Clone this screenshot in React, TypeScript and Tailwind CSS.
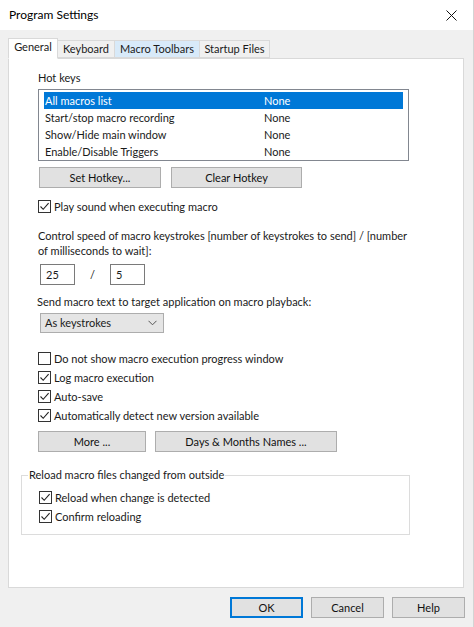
import React, {useState} from 'react';

interface CheckRowProps {
    label: string;
    checked: boolean;
    onToggle: () => void;
}

const CheckRow: React.FC<CheckRowProps> = ({label, checked, onToggle}) => (
    <label className="flex items-center h-[19px] cursor-default select-none" onClick={onToggle}>
        <span className="w-[13px] h-[13px] border border-[#333333] bg-white flex items-center justify-center shrink-0">
            {checked && (
                <svg width="11" height="11" viewBox="0 0 11 11" fill="none">
                    <path d="M1.5 5.5 L4.2 8.3 L9.6 2.2" stroke="#222222" strokeWidth="1.1"/>
                </svg>
            )}
        </span>
        <span className="ml-[3px]">{label}</span>
    </label>
);

const WinButton: React.FC<{ label: string; className?: string; primary?: boolean }> = ({label, className, primary}) => (
    <button
        className={`h-[21px] bg-[#e1e1e1] text-[#111] ${
            primary ? 'border-2 border-[#0078d7]' : 'border border-[#adadad]'
        } ${className ?? ''}`}
    >
        {label}
    </button>
);

const hotkeys = [
    {name: 'All macros list', key: 'None'},
    {name: 'Start/stop macro recording', key: 'None'},
    {name: 'Show/Hide main window', key: 'None'},
    {name: 'Enable/Disable Triggers', key: 'None'},
];

// tab labels with their widths in the strip
const tabs = [
    {label: 'General', width: 'w-[50px]'},
    {label: 'Keyboard', width: 'w-[57px]'},
    {label: 'Macro Toolbars', width: 'w-[85px]'},
    {label: 'Startup Files', width: 'w-[70px]'},
];

export default function App() {
    const [activeTab, setActiveTab] = useState(0);
    const [selectedKey, setSelectedKey] = useState(0);
    const [checks, setChecks] = useState<Record<string, boolean>>({
        playSound: true,
        noProgress: false,
        log: true,
        autoSave: true,
        detectVersion: true,
        reload: true,
        confirm: true,
    });

    const toggle = (k: string) => setChecks((prev) => ({...prev, [k]: !prev[k]}));

    return (
        <div
            className="w-[474px] h-[627px] bg-[#f0f0f0] text-[11px] leading-[16px] text-[#1a1a1a] flex flex-col border-r border-[#d4d4d4]"
            style={{fontFamily: 'Lato, "Noto Sans", sans-serif'}}
        >
            {/* Title bar */}
            <div className="h-[30px] bg-white flex items-center pl-[9px] pr-[10px] shrink-0">
                <span className="text-[12px] text-black">Program Settings</span>
                <svg className="ml-auto mr-[6px]" width="11" height="11" viewBox="0 0 11 11">
                    <path d="M0.5 0.5 L10.5 10.5 M10.5 0.5 L0.5 10.5" stroke="#111" strokeWidth="1"/>
                </svg>
            </div>

            {/* Tabs */}
            <div className="flex items-end pl-[8px] mt-[8px] h-[20px] relative z-10">
                {tabs.map((tab, i) => (
                    <button
                        key={tab.label}
                        onClick={() => setActiveTab(i)}
                        className={`${tab.width} text-center border border-[#d9d9d9] ${
                            i === activeTab
                                ? 'h-[21px] bg-white border-b-white -mb-px pb-[3px]'
                                : i === 2
                                    ? 'h-[18px] bg-[#d8eaf9] border-l-0 border-[#c5dcf0]'
                                    : 'h-[18px] bg-[#f0f0f0] border-l-0'
                        }`}
                    >
                        {tab.label}
                    </button>
                ))}
            </div>

            {/* Tab panel */}
            <div className="ml-[8px] w-[456px] h-[530px] bg-white border border-[#d9d9d9] px-[12px] pt-[11px]">
                <div className="pl-[17px]">
                    <div>Hot keys</div>
                    <div className="mt-[3px] w-[371px] h-[72px] border border-[#828790] pt-[2px] px-[5px]">
                        {hotkeys.map((hk, i) => (
                            <div
                                key={hk.name}
                                onClick={() => setSelectedKey(i)}
                                className={`flex h-[17px] items-center ${
                                    i === selectedKey ? 'bg-[#0078d7] text-white' : ''
                                }`}
                            >
                                <span className="w-[220px] pl-[1px]">{hk.name}</span>
                                <span>{hk.key}</span>
                            </div>
                        ))}
                    </div>

                    <div className="flex gap-[10px] mt-[6px] ml-[1px]">
                        <WinButton label="Set Hotkey..." className="w-[122px]"/>
                        <WinButton label="Clear Hotkey" className="w-[131px]"/>
                    </div>

                    <div className="mt-[9px]">
                        <CheckRow label="Play sound when executing macro" checked={checks.playSound}
                                  onToggle={() => toggle('playSound')}/>
                    </div>

                    <p className="mt-[12px] leading-[15px] w-[375px]">
                        Control speed of macro keystrokes [number of keystrokes to send] / [number of milliseconds to wait]:
                    </p>

                    <div className="flex items-center mt-[6px] ml-[2px]">
                        <input
                            className="w-[35px] h-[21px] border border-[#7a7a7a] px-[5px] outline-none"
                            defaultValue="25"
                        />
                        <span className="w-[35px] text-center">/</span>
                        <input
                            className="w-[35px] h-[21px] border border-[#7a7a7a] px-[5px] outline-none"
                            defaultValue="5"
                        />
                    </div>

                    <div className="mt-[9px] -ml-[1px]">Send macro text to target application on macro playback:</div>

                    <div className="mt-[3px] ml-[2px] w-[124px] h-[20px] bg-[#e5e5e5] border border-[#adadad] flex items-center pl-[4px] pr-[6px]">
                        <span>As keystrokes</span>
                        <svg className="ml-auto" width="9" height="6" viewBox="0 0 9 6" fill="none">
                            <path d="M0.5 0.8 L4.5 4.8 L8.5 0.8" stroke="#555" strokeWidth="1"/>
                        </svg>
                    </div>

                    <div className="mt-[16px] flex flex-col">
                        <CheckRow label="Do not show macro execution progress window" checked={checks.noProgress}
                                  onToggle={() => toggle('noProgress')}/>
                        <CheckRow label="Log macro execution" checked={checks.log} onToggle={() => toggle('log')}/>
                        <CheckRow label="Auto-save" checked={checks.autoSave} onToggle={() => toggle('autoSave')}/>
                        <CheckRow label="Automatically detect new version available" checked={checks.detectVersion}
                                  onToggle={() => toggle('detectVersion')}/>
                    </div>

                    <div className="flex gap-[9px] mt-[6px]">
                        <WinButton label="More ..." className="w-[108px]"/>
                        <WinButton label="Days & Months Names ..." className="w-[182px]"/>
                    </div>
                </div>

                {/* Reload group */}
                <fieldset className="mt-[15px] w-[389px] border border-[#dcdcdc] pl-[6px] pb-[8px]">
                    <legend className="px-[1px]">Reload macro files changed from outside</legend>
                    <div className="pl-[11px] mt-[5px]">
                        <CheckRow label="Reload when change is detected" checked={checks.reload}
                                  onToggle={() => toggle('reload')}/>
                        <CheckRow label="Confirm reloading" checked={checks.confirm}
                                  onToggle={() => toggle('confirm')}/>
                    </div>
                </fieldset>
            </div>

            {/* Dialog buttons */}
            <div className="flex justify-end gap-[8px] mt-[9px] pr-[8px]">
                <WinButton label="OK" className="w-[73px]" primary/>
                <WinButton label="Cancel" className="w-[73px]"/>
                <WinButton label="Help" className="w-[73px]"/>
            </div>
        </div>
    );
}
